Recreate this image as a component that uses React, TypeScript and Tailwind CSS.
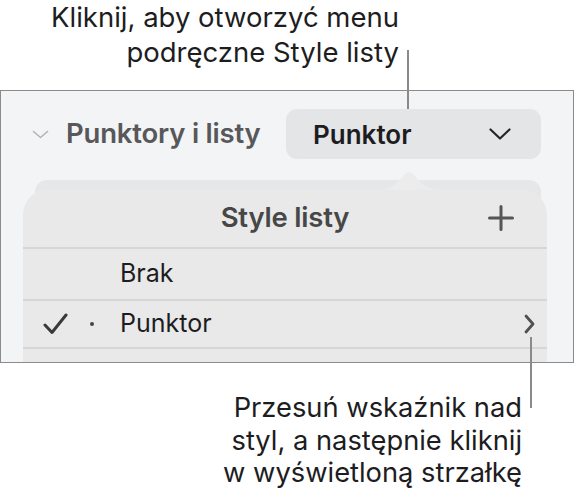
import React from "react";

export default function App() {
  return (
    <div className="relative w-[575px] h-[495px] overflow-hidden bg-white font-['Inter','Noto_Sans',sans-serif] text-[#1d1d1f]">
      {/* Top callout */}
      <p className="pr-[176px] text-right text-[27.5px] leading-[35px]">
        Kliknij, aby otworzyć menu
        <br />
        podręczne Style listy
      </p>
      <div className="absolute left-[407px] top-[50px] h-[59px] w-[2px] bg-[#8a8a8a]" />

      {/* Inspector panel */}
      <div className="mt-[20px] h-[273px] w-[574px] overflow-hidden border border-[#8b8b8b] bg-[#f3f4f6]">
        <div className="mt-[18px] flex h-[50px] items-center">
          <svg className="ml-[31px] h-[9px] w-[17px]" viewBox="0 0 17 9" fill="none">
            <path d="M1.5 1.5 L8.5 7.5 L15.5 1.5" stroke="#b3b3b5" strokeWidth="1.6" strokeLinecap="round" strokeLinejoin="round" />
          </svg>
          <span className="ml-[17px] text-[27.5px] font-semibold tracking-[-0.2px] text-[#58585a]">Punktory i listy</span>
          <div className="ml-auto mr-[32px] flex h-[50px] w-[255px] items-center rounded-[11px] bg-[#e4e5e7] pl-[27px] pr-[30px]">
            <span className="text-[26px] font-semibold text-[#1d1d1f]">Punktor</span>
            <svg className="ml-auto h-[12px] w-[22px]" viewBox="0 0 22 12" fill="none">
              <path d="M1.5 1.5 L11 10.5 L20.5 1.5" stroke="#262626" strokeWidth="2.2" strokeLinecap="round" strokeLinejoin="round" />
            </svg>
          </div>
        </div>

        {/* Popover */}
        <div className="ml-[34px] mt-[21px] w-[506px] rounded-[12px] bg-[#e6e7e9] pt-[9px]">
          <div className="relative -ml-[12px] -mr-[6px] rounded-t-[26px] bg-[#e9e9e9]">
            <svg className="absolute left-[356px] top-[-23px] h-[24px] w-[60px]" viewBox="0 0 60 24">
              <path d="M0 24 C12 24 19 16 25 9 Q30 3 35 9 C41 16 48 24 60 24 Z" fill="#ececec" />
            </svg>
            <div className="grid h-[58px] grid-cols-[1fr_auto_1fr] items-center">
              <span />
              <span className="text-[27.5px] font-semibold tracking-[-0.2px] text-[#474747]">Style listy</span>
              <svg className="mr-[33px] h-[26px] w-[26px] justify-self-end" viewBox="0 0 26 26" fill="none">
                <path d="M13 1.5 V24.5 M1.5 13 H24.5" stroke="#555555" strokeWidth="3" strokeLinecap="round" />
              </svg>
            </div>
            <div className="h-[2px] bg-[#d6d6d6]" />
            <div className="flex h-[50px] items-center pl-[97px]">
              <span className="text-[25px]">Brak</span>
            </div>
            <div className="h-[2px] bg-[#d6d6d6]" />
            <div className="flex h-[46px] items-center pr-[12px]">
              <svg className="ml-[20px] h-[22px] w-[25px]" viewBox="0 0 25 22" fill="none">
                <path d="M2 12 L9 19.5 L23 2" stroke="#3a3a3a" strokeWidth="3" strokeLinecap="round" strokeLinejoin="round" />
              </svg>
              <span className="ml-[22px] h-[4px] w-[4px] rounded-full bg-[#444]" />
              <span className="ml-[26px] text-[25px]">Punktor</span>
              <svg className="ml-auto h-[20px] w-[11px]" viewBox="0 0 11 20" fill="none">
                <path d="M2 2 L9 10 L2 18" stroke="#505050" strokeWidth="2.8" strokeLinecap="round" strokeLinejoin="round" />
              </svg>
            </div>
            <div className="h-[2px] bg-[#d6d6d6]" />
            <div className="h-[50px]" />
          </div>
        </div>
      </div>
      <div className="absolute left-[530px] top-[337px] h-[71px] w-[2px] bg-[#8a8a8a]" />

      {/* Bottom callout */}
      <p className="mt-[29px] pr-[53px] text-right text-[27.3px] leading-[32.5px]">
        Przesuń wskaźnik nad
        <br />
        styl, a następnie kliknij
        <br />w wyświetloną strzałkę
      </p>
    </div>
  );
}
